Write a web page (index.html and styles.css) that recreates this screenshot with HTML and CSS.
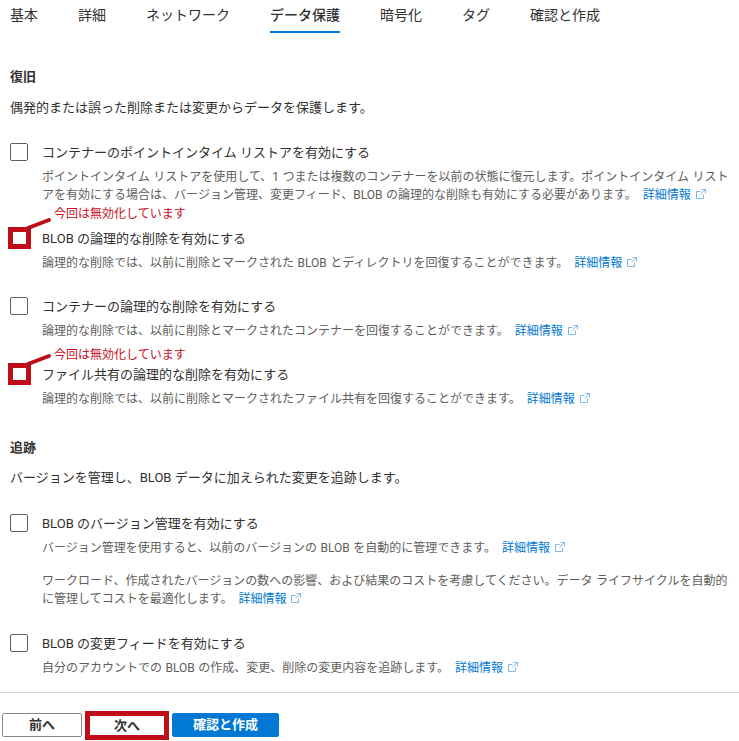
FILE: index.html
```html
<!DOCTYPE html>
<html lang="ja">
<head>
    <meta charset="UTF-8">
    <title>データ保護</title>
    <link rel="stylesheet" href="styles.css">
</head>
<body>
    <nav class="tabs">
        <a class="tab">基本</a>
        <a class="tab">詳細</a>
        <a class="tab">ネットワーク</a>
        <a class="tab tab-active">データ保護</a>
        <a class="tab">暗号化</a>
        <a class="tab">タグ</a>
        <a class="tab">確認と作成</a>
    </nav>

    <main class="content">
        <h2 class="section-title">復旧</h2>
        <p class="section-desc">偶発的または誤った削除または変更からデータを保護します。</p>

        <div class="option option-first">
            <span class="check"></span>
            <div class="option-label">コンテナーのポイントインタイム リストアを有効にする</div>
            <div class="option-desc">ポイントインタイム リストアを使用して、1 つまたは複数のコンテナーを以前の状態に復元します。ポイントインタイム リストアを有効にする場合は、バージョン管理、変更フィード、BLOB の論理的な削除も有効にする必要があります。 <a class="more">詳細情報<svg class="ext" viewBox="0 0 10 10"><path d="M7.5 5.500v4h-7v-7h4M5.500 .5h4v4M9.500 .5l-5 5" /></svg></a></div>
        </div>

        <div class="note">今回は無効化しています</div>
        <div class="option option-marked">
            <svg class="mark" viewBox="0 0 46 36"><path class="mark-line" d="M20 11 41 3" /><rect class="mark-box" x="2.500" y="12.500" width="18" height="17" /></svg>
            <span class="check"></span>
            <div class="option-label">BLOB の論理的な削除を有効にする</div>
            <div class="option-desc">論理的な削除では、以前に削除とマークされた BLOB とディレクトリを回復することができます。 <a class="more">詳細情報<svg class="ext" viewBox="0 0 10 10"><path d="M7.5 5.500v4h-7v-7h4M5.500 .5h4v4M9.500 .5l-5 5" /></svg></a></div>
        </div>

        <div class="option option-gap">
            <span class="check"></span>
            <div class="option-label">コンテナーの論理的な削除を有効にする</div>
            <div class="option-desc">論理的な削除では、以前に削除とマークされたコンテナーを回復することができます。 <a class="more">詳細情報<svg class="ext" viewBox="0 0 10 10"><path d="M7.5 5.500v4h-7v-7h4M5.500 .5h4v4M9.500 .5l-5 5" /></svg></a></div>
        </div>

        <div class="note note-gap">今回は無効化しています</div>
        <div class="option option-marked option-tight">
            <svg class="mark" viewBox="0 0 46 36"><path class="mark-line" d="M20 11 41 3" /><rect class="mark-box" x="2.500" y="12.500" width="18" height="17" /></svg>
            <span class="check"></span>
            <div class="option-label">ファイル共有の論理的な削除を有効にする</div>
            <div class="option-desc">論理的な削除では、以前に削除とマークされたファイル共有を回復することができます。 <a class="more">詳細情報<svg class="ext" viewBox="0 0 10 10"><path d="M7.5 5.500v4h-7v-7h4M5.500 .5h4v4M9.500 .5l-5 5" /></svg></a></div>
        </div>

        <h2 class="section-title section-second">追跡</h2>
        <p class="section-desc section-desc-second">バージョンを管理し、BLOB データに加えられた変更を追跡します。</p>

        <div class="option option-tracking">
            <span class="check"></span>
            <div class="option-label">BLOB のバージョン管理を有効にする</div>
            <div class="option-desc">バージョン管理を使用すると、以前のバージョンの BLOB を自動的に管理できます。 <a class="more">詳細情報<svg class="ext" viewBox="0 0 10 10"><path d="M7.5 5.500v4h-7v-7h4M5.500 .5h4v4M9.500 .5l-5 5" /></svg></a></div>
            <div class="option-desc option-desc-second">ワークロード、作成されたバージョンの数への影響、および結果のコストを考慮してください。データ ライフサイクルを自動的に管理してコストを最適化します。 <a class="more">詳細情報<svg class="ext" viewBox="0 0 10 10"><path d="M7.5 5.500v4h-7v-7h4M5.500 .5h4v4M9.500 .5l-5 5" /></svg></a></div>
        </div>

        <div class="option option-last">
            <span class="check"></span>
            <div class="option-label">BLOB の変更フィードを有効にする</div>
            <div class="option-desc">自分のアカウントでの BLOB の作成、変更、削除の変更内容を追跡します。 <a class="more">詳細情報<svg class="ext" viewBox="0 0 10 10"><path d="M7.5 5.500v4h-7v-7h4M5.500 .5h4v4M9.500 .5l-5 5" /></svg></a></div>
        </div>
    </main>

    <footer class="actions">
        <button class="btn">前へ</button>
        <button class="btn btn-marked">次へ</button>
        <button class="btn btn-primary">確認と作成</button>
    </footer>
</body>
</html>
```

FILE: styles.css
```css
html, body {
    height: 100%;
}

body {
    margin: 0;
    overflow: hidden;
    background-color: #fff;
    color: #323130;
    font-family: Roboto, "Noto Sans CJK JP", sans-serif;
    font-size: 13px;
    line-height: 18px;
}

.tabs {
    display: flex;
    gap: 40px;
    height: 33px;
    padding-left: 10px;
    font-size: 14px;
}

.tab {
    height: 31px;
    line-height: 30px;
}

.tab-active {
    border-bottom: 2px solid #0078d4;
    font-weight: 500;
}

.content {
    box-sizing: border-box;
    height: 660px;
    padding: 35px 8px 0 10px;
    border-bottom: 1px solid #d6d6d6;
}

.section-title {
    margin: 0;
    font-size: 13px;
    font-weight: 700;
    line-height: 18px;
}

.section-second {
    margin-top: 31px;
}

.section-desc {
    margin: 13px 0 0;
}

.section-desc-second {
    margin-top: 12px;
}

.option {
    position: relative;
    display: grid;
    grid-template-columns: 18px 1fr;
    column-gap: 14px;
}

.option-first {
    margin-top: 26px;
}

.option-tracking {
    margin-top: 27px;
}

.option-gap {
    margin-top: 25px;
}

.option-last {
    margin-top: 26px;
}

.option-marked {
    margin-top: 6px;
}

.option-tight {
    margin-top: 1px;
}

.check {
    width: 18px;
    height: 18px;
    box-sizing: border-box;
    border: 1px solid #605e5c;
    border-radius: 2px;
    background-color: #fff;
}

.option-label {
    padding-top: 1px;
    line-height: 18px;
}

.option-desc {
    grid-column: 2;
    margin-top: 6px;
    color: #605e5c;
    font-size: 12px;
    word-spacing: 0.5px;
}

.option-desc-second {
    margin-top: 15px;
}

.more {
    margin-left: 2.5px;
    color: #0078d4;
}

.ext {
    width: 10px;
    height: 10px;
    margin-left: 5px;
    fill: none;
    stroke: #7fb8e6;
    stroke-width: 1;
}

.note {
    height: 18px;
    margin-top: 1px;
    padding-left: 44px;
    color: #c50f1f;
    font-size: 12px;
}

.note-gap {
    margin-top: 6px;
}

.mark {
    position: absolute;
    top: -12px;
    left: -2px;
    z-index: 1;
    width: 46px;
    height: 36px;
}

.mark-line {
    fill: none;
    stroke: #c00d1a;
    stroke-width: 4;
    stroke-linecap: round;
}

.mark-box {
    fill: #fff;
    stroke: #c00d1a;
    stroke-width: 5;
}

.actions {
    display: flex;
    align-items: flex-start;
    gap: 3px;
    padding: 20px 0 0 2px;
}

.btn {
    box-sizing: border-box;
    width: 80px;
    height: 24px;
    padding: 0;
    border: 1px solid #8a8886;
    border-radius: 2px;
    background-color: #fff;
    color: #323130;
    font-family: inherit;
    font-size: 13px;
    font-weight: 700;
    line-height: 20px;
}

.btn-marked {
    width: 84px;
    height: 29px;
    margin-top: -2px;
    border: 5px solid #c00d1a;
    border-radius: 0;
}

.btn-primary {
    width: 107px;
    border-color: #0078d4;
    background-color: #0078d4;
    color: #fff;
}
```
